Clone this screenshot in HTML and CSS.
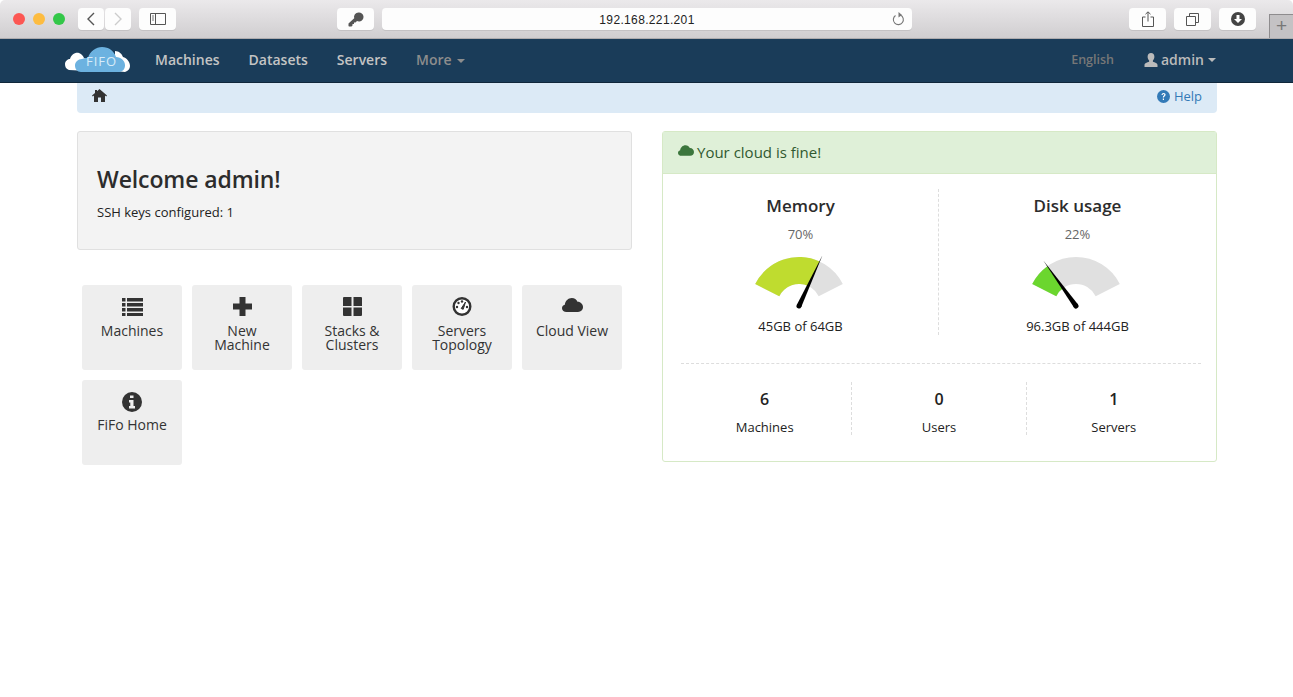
FILE: index.html
```html
<!DOCTYPE html>
<html lang="en">
<head>
    <meta charset="UTF-8">
    <title>FiFo</title>
    <link rel="stylesheet" href="styles.css">
</head>
<body>
    <!-- Safari toolbar -->
    <div class="browser-bar">
        <div class="lights">
            <span class="light red"></span>
            <span class="light yellow"></span>
            <span class="light green"></span>
        </div>
        <div class="nav-arrows">
            <div class="tool-btn arrow-btn"><svg width="10" height="14" viewBox="0 0 10 14"><path d="M8 1 2 7l6 6" fill="none" stroke="#555" stroke-width="1.4"/></svg></div>
            <div class="tool-btn arrow-btn"><svg width="10" height="14" viewBox="0 0 10 14"><path d="M2 1l6 6-6 6" fill="none" stroke="#ccc" stroke-width="1.4"/></svg></div>
        </div>
        <div class="tool-btn sidebar-btn"><svg width="16" height="12" viewBox="0 0 16 12"><path d="M.5.5h15v11H.5zM5.5.5v11" fill="none" stroke="#555"/><path d="M2 3h2M2 5h2M2 7h2" stroke="#777"/></svg></div>
        <div class="tool-btn key-btn"><svg width="16" height="15" viewBox="0 0 16 15"><path d="M10.500 0.500a4.500 4.500 0 0 1 1 9 4.500 4.500 0 0 1-2.500-.4L7.500 10.500H6V12H4.500v1.500L3.500 14.500H1L.5 14v-2.500l5.700-5.200A4.500 4.500 0 0 1 10.500.5z" fill="#555"/></svg></div>
        <div class="url-bar">
            <span class="url-text">192.168.221.201</span>
            <svg class="reload" width="13" height="14" viewBox="0 0 13 14"><path d="M8.500 3.100A5 5 0 1 1 3.500 3.500" fill="none" stroke="#777" stroke-width="1.100"/><path d="M6.500 0l3.500 3-3.500 2.500z" fill="#777"/></svg>
        </div>
        <div class="tool-btn share-btn"><svg width="12" height="16" viewBox="0 0 12 16"><path d="M3.500 6H.5v9.500h11V6h-3M6 10.500V1M3.500 3.200 6 .8l2.500 2.400" fill="none" stroke="#555"/></svg></div>
        <div class="tool-btn tabs-btn"><svg width="13" height="13" viewBox="0 0 13 13"><path d="M.5 3.500h9v9h-9zM3.500 3.500v-3h9v9h-3" fill="none" stroke="#555"/></svg></div>
        <div class="tool-btn download-btn"><svg width="14" height="14" viewBox="0 0 14 14"><circle cx="7" cy="7" r="7" fill="#444"/><path d="M5.500 3h3v4H11l-4 4-4-4h2.500z" fill="#fff"/></svg></div>
        <div class="new-tab">+</div>
    </div>

    <nav class="navbar">
        <div class="brand">
            <svg width="66" height="30" viewBox="0 0 66 30">
                <path d="M4 26c-3-1-4-3-4-6 0-3 3-5 5-5 1-4 5-7 9-6 3 1 4 3 5 5l14 6-10 7z" fill="#fff"/>
                <path d="M50 7c4 0 7 3 8 6 4 1 7 5 7 9 0 3-2 5-5 6l-10-1z" fill="#fff"/>
                <path d="M16 28c-4 0-6-3-6-6.500S13 15 17 15c2-1 4-1 6-1 2-7 8-11 14-11 7 0 12 4 14 10 5 0 9 4 9 8 0 4-2 6-5 7z" fill="#6cb2e0"/>
                <text x="21" y="22" class="brand-text">FIFO</text>
            </svg>
        </div>
        <ul class="nav-links">
            <li>Machines</li>
            <li>Datasets</li>
            <li>Servers</li>
            <li class="muted">More <span class="caret"></span></li>
        </ul>
        <div class="nav-right">
            <span class="lang">English</span>
            <span class="user">
                <svg width="14" height="14" viewBox="0 0 14 14"><path d="M7 0c2.200 0 3.400 1.600 3.400 3.800 0 1.500-.6 2.800-1.500 3.600v1.300c1.800.7 4.600 1.300 4.600 3.300V14H.5v-2c0-2 2.800-2.600 4.600-3.300V7.400C4.200 6.600 3.600 5.300 3.600 3.800 3.600 1.600 4.800 0 7 0z" fill="#bbb"/></svg>
                admin <span class="caret"></span>
            </span>
        </div>
    </nav>

    <div class="container">
        <div class="breadcrumb">
            <svg width="15" height="13" viewBox="0 0 15 13"><path d="M7.500 0 15 6.500l-.8 1L13 6.600V13H9V8.500H6V13H2V6.600L.8 7.500 0 6.500 3 3.900V1h2v1.200z" fill="#333"/></svg>
            <a class="help">
                <svg width="13" height="13" viewBox="0 0 13 13"><circle cx="6.500" cy="6.500" r="6.500" fill="#337ab7"/><path d="M4.500 5c0-1.200 1-2 2.100-2s2 .8 2 1.800c0 1.400-1.600 1.400-1.600 2.700H5.800c0-1.900 1.500-1.900 1.500-2.700 0-.4-.3-.7-.8-.7s-.8.400-.8.900zM5.800 8.500H7V10H5.800z" fill="#fff"/></svg>
                Help
            </a>
        </div>

        <div class="columns">
            <div class="left-col">
                <div class="well">
                    <h2>Welcome admin!</h2>
                    <p>SSH keys configured: 1</p>
                </div>
                <div class="tiles">
                    <a class="tile">
                        <svg width="21" height="19" viewBox="0 0 21 19"><path d="M0 1h3.500v3.500H0zM5 1h16v3.500H5zM0 6h3.500v3.500H0zM5 6h16v3.500H5zM0 11h3.500v3.500H0zM5 11h16v3.500H5zM0 16h3.500v3H0zM5 16h16v3H5z" fill="#333"/></svg>
                        <span>Machines</span>
                    </a>
                    <a class="tile">
                        <svg width="19" height="19" viewBox="0 0 19 19"><path d="M6.500 0h6v6.500H19v6h-6.500V19h-6v-6.500H0v-6h6.500z" fill="#333"/></svg>
                        <span>New Machine</span>
                    </a>
                    <a class="tile">
                        <svg width="19" height="19" viewBox="0 0 19 19"><path d="M0 1a1 1 0 0 1 1-1h7.500v9H0zM10.500 0H18a1 1 0 0 1 1 1v8h-8.500zM0 10.500h8.500V19H1a1 1 0 0 1-1-1zM10.500 10.500H19V18a1 1 0 0 1-1 1h-7.500z" fill="#333"/></svg>
                        <span>Stacks &amp; Clusters</span>
                    </a>
                    <a class="tile">
                        <svg width="20" height="19" viewBox="0 0 20 19"><circle cx="10" cy="9.500" r="8.300" fill="#fff" stroke="#333" stroke-width="2.400"/><path d="M9.200 11.500 13.500 5l-2.300 7.300z" fill="#333" stroke="#333"/><circle cx="5" cy="10" r="1.200" fill="#333"/><circle cx="6.500" cy="6" r="1.200" fill="#333"/><circle cx="10" cy="4.500" r="1.200" fill="#333"/><circle cx="15" cy="10" r="1.200" fill="#333"/></svg>
                        <span>Servers Topology</span>
                    </a>
                    <a class="tile">
                        <svg class="cloud-icon" width="21" height="14" viewBox="0 0 21 14"><path d="M4.500 14C2 14 0 12.500 0 10.200 0 8.500 1 7.200 2.800 6.700 3.300 2.800 6.300 0 9.800 0c2.700 0 4.800 1.500 5.700 3.800 3-.2 5.500 2.500 5.500 5.300 0 2.700-2 4.900-5 4.900z" fill="#333"/></svg>
                        <span>Cloud View</span>
                    </a>
                    <a class="tile">
                        <svg class="info-icon" width="20" height="20" viewBox="0 0 20 20"><circle cx="10" cy="10" r="10" fill="#333"/><path d="M8 3.500h3.500V6H8zM7 8h4.500v6H13v2.500H7V14h1.300v-3.500H7z" fill="#eee"/></svg>
                        <span>FiFo Home</span>
                    </a>
                </div>
            </div>

            <div class="panel">
                <div class="panel-heading">
                    <svg width="16" height="11" viewBox="0 0 21 14"><path d="M4.500 14C2 14 0 12.500 0 10.200 0 8.500 1 7.200 2.800 6.700 3.300 2.800 6.300 0 9.800 0c2.700 0 4.800 1.500 5.700 3.800 3-.2 5.500 2.500 5.500 5.300 0 2.700-2 4.900-5 4.900z" fill="#3c763d"/></svg>
                    Your cloud is fine!
                </div>
                <div class="panel-body">
                    <div class="gauges">
                        <div class="gauge">
                            <h4>Memory</h4>
                            <div class="percent">70%</div>
                            <svg class="dial" width="100" height="60" viewBox="0 -6 100 60">
                                <path d="M6.200 28.100A49 49 0 0 1 93.800 28.100L69.700 40.200A22 22 0 0 0 30.300 40.200Z" fill="#e0e0e0"/>
                                <path d="M6.200 28.100A49 49 0 0 1 70.600 5.500L59.200 30A22 22 0 0 0 30.300 40.200Z" fill="#bfdc2f"/>
                                <g transform="rotate(24.800 50 50)"><polygon points="50,-6 52.500,50 47.500,50"/><circle cx="50" cy="50" r="2.500"/></g>
                            </svg>
                            <div class="amount">45GB of 64GB</div>
                        </div>
                        <div class="gauge">
                            <h4>Disk usage</h4>
                            <div class="percent">22%</div>
                            <svg class="dial" width="100" height="60" viewBox="0 -6 100 60">
                                <path d="M6.200 28.100A49 49 0 0 1 93.800 28.100L69.700 40.200A22 22 0 0 0 30.300 40.200Z" fill="#e0e0e0"/>
                                <path d="M6.200 28.100A49 49 0 0 1 21.400 10.200L37.200 32.100A22 22 0 0 0 30.300 40.200Z" fill="#6bd62e"/>
                                <g transform="rotate(-35.700 50 50)"><polygon points="50,-6 52.500,50 47.500,50"/><circle cx="50" cy="50" r="2.500"/></g>
                            </svg>
                            <div class="amount">96.3GB of 444GB</div>
                        </div>
                    </div>
                    <div class="separator"></div>
                    <div class="stats">
                        <div class="stat"><strong>6</strong><span>Machines</span></div>
                        <div class="stat"><strong>0</strong><span>Users</span></div>
                        <div class="stat"><strong>1</strong><span>Servers</span></div>
                    </div>
                </div>
            </div>
        </div>
    </div>
</body>
</html>
```

FILE: styles.css
```css
* {
    box-sizing: border-box;
}
body {
    margin: 0;
    background: #fff;
    color: #333;
    font-family: "Open Sans", Arial, sans-serif;
    font-size: 13px;
    overflow: hidden;
}

/* browser toolbar */
.browser-bar {
    display: flex;
    align-items: flex-start;
    height: 39px;
    padding-top: 8px;
    background: linear-gradient(#ebe9eb, #d0ced0);
    border-bottom: 1px solid #aeacae;
    border-radius: 5px 5px 0 0;
    position: relative;
}
.lights {
    display: flex;
    gap: 8px;
    margin: 5px 0 0 13px;
    width: 65px;
}
.light {
    width: 12px;
    height: 12px;
    border-radius: 50%;
}
.red { background: #fc5753; }
.yellow { background: #fdbc40; }
.green { background: #33c748; }
.tool-btn {
    display: flex;
    justify-content: center;
    align-items: center;
    height: 22px;
    background: #fdfdfd;
    border-radius: 4px;
    box-shadow: 0 1px 0 #c4c2c4;
}
.nav-arrows {
    display: flex;
    gap: 1px;
}
.arrow-btn { width: 26px; }
.sidebar-btn { width: 37px; margin-left: 8px; }
.key-btn { width: 37px; margin-left: 161px; }
.url-bar {
    display: flex;
    align-items: center;
    position: relative;
    justify-content: center;
    width: 530px;
    height: 22px;
    margin-left: 8px;
    padding-top: 1px;
    background: #fdfdfd;
    border-radius: 4px;
    box-shadow: 0 1px 0 #c4c2c4;
}
.url-text {
    font-family: "Liberation Sans", Arial, sans-serif;
    font-size: 12px;
    letter-spacing: 0.35px;
    color: #222;
}
.reload {
    position: absolute;
    right: 7px;
    top: 4px;
}
.share-btn { width: 37px; margin-left: 217px; }
.tabs-btn { width: 37px; margin-left: 8px; }
.download-btn { width: 37px; margin-left: 8px; }
.new-tab {
    position: absolute;
    right: 0;
    top: 14px;
    width: 24px;
    height: 24px;
    background: #c4c2c4;
    border: 1px solid #8e8c8e;
    border-bottom: none;
    border-right: none;
    color: #777;
    font-family: "Liberation Sans", Arial, sans-serif;
    font-size: 19px;
    line-height: 22px;
    text-align: center;
}

/* app navbar */
.navbar {
    display: flex;
    align-items: center;
    height: 44px;
    padding: 0 77px 2px 65px;
    background: #1a3c59;
    border-bottom: 1px solid #10273a;
}
.brand {
    display: flex;
    width: 90px;
    margin-bottom: 2px;
}
.brand-text {
    font-family: "Open Sans", Arial, sans-serif;
    font-size: 13px;
    letter-spacing: 1px;
    fill: #d8ecf8;
}
.nav-links {
    display: flex;
    gap: 29px;
    margin: 0;
    padding: 0;
    list-style: none;
    color: #c4c4c4;
    font-size: 14px;
    font-weight: 600;
}
.nav-links .muted {
    color: #8d8d8d;
}
.caret {
    display: inline-block;
    width: 0;
    height: 0;
    margin-left: 2px;
    vertical-align: middle;
    border-top: 4px solid currentColor;
    border-left: 4px solid transparent;
    border-right: 4px solid transparent;
}
.nav-right {
    display: flex;
    align-items: center;
    gap: 30px;
    margin-left: auto;
}
.lang {
    color: #777;
    font-size: 12.5px;
    font-weight: 600;
}
.user {
    display: flex;
    align-items: center;
    gap: 3px;
    color: #bbb;
    font-size: 14px;
    font-weight: 600;
}
.user .caret {
    margin-left: 1px;
}

.container {
    width: 1140px;
    margin-left: 77px;
}
.breadcrumb {
    display: flex;
    justify-content: space-between;
    align-items: center;
    height: 30px;
    padding: 0 15px;
    background: #dceaf6;
    border-radius: 0 0 4px 4px;
}
.breadcrumb > svg {
    margin-top: -6px;
}
.help {
    display: flex;
    align-items: center;
    gap: 4px;
    margin-bottom: 4px;
    color: #337ab7;
    font-size: 13px;
}
.columns {
    display: flex;
    gap: 30px;
    margin-top: 18px;
}
.left-col, .panel {
    width: 555px;
}
.well {
    height: 119px;
    padding: 31px 19px 0;
    background: #f3f3f3;
    border: 1px solid #e0e0e0;
    border-radius: 3px;
}
.well h2 {
    margin: 0 0 7px;
    font-size: 23px;
    line-height: 33px;
    letter-spacing: -0.1px;
    font-weight: 600;
    color: #2c2c2c;
}
.well p {
    margin: 0;
    font-size: 13px;
    color: #222;
}
.tiles {
    display: flex;
    flex-wrap: wrap;
    gap: 10px;
    margin-top: 35px;
    padding-left: 5px;
}
.tile {
    display: flex;
    flex-direction: column;
    align-items: center;
    width: 100px;
    height: 85px;
    padding: 12px 6px 0;
    background: #eee;
    border-radius: 3px;
    color: #333;
    font-size: 14px;
    line-height: 14px;
    text-align: center;
}
.tile span {
    margin-top: 8px;
}
.cloud-icon {
    margin: 1px 0 4px;
}
.tile .info-icon + span {
    margin-top: 6px;
}

.panel {
    height: 331px;
    border: 1px solid #d6e9c6;
    border-radius: 3px;
}
.panel-heading {
    display: flex;
    align-items: center;
    gap: 3px;
    height: 42px;
    padding: 0 15px 2px;
    background: #dff0d8;
    border-bottom: 1px solid #d6e9c6;
    color: #30592f;
    font-size: 15px;
}
.panel-heading svg {
    margin-top: -3px;
}
.panel-body {
    padding-top: 15px;
}
.gauges {
    display: flex;
    height: 146px;
}
.gauge {
    display: flex;
    flex-direction: column;
    align-items: center;
    color: #222;
}
.gauge:first-child {
    width: 276px;
    border-right: 1px dashed #ddd;
}
.gauge:last-child {
    flex: 1;
}
.gauge h4 {
    margin: 5px 0 9px;
    font-size: 17px;
    line-height: 23px;
    font-weight: 600;
    color: #2c2c2c;
}
.percent {
    color: #666;
    font-size: 13px;
    line-height: 17px;
}
.dial {
    margin: 7px 0 0 -3px;
}
.amount {
    margin-top: 8px;
    font-size: 13px;
    line-height: 17px;
}
.separator {
    margin: 28px 15px 0 18px;
    border-top: 1px dashed #ddd;
}
.stats {
    display: flex;
    margin: 18px 15px 0;
}
.stat {
    display: flex;
    flex-direction: column;
    align-items: center;
    width: 33.33%;
    height: 53px;
    padding-top: 6px;
    border-right: 1px dashed #ddd;
    font-size: 13px;
    color: #222;
}
.stat:last-child {
    border-right: none;
}
.stat strong {
    margin-bottom: 8px;
    font-size: 16px;
    line-height: 22px;
    font-weight: 600;
}
```
